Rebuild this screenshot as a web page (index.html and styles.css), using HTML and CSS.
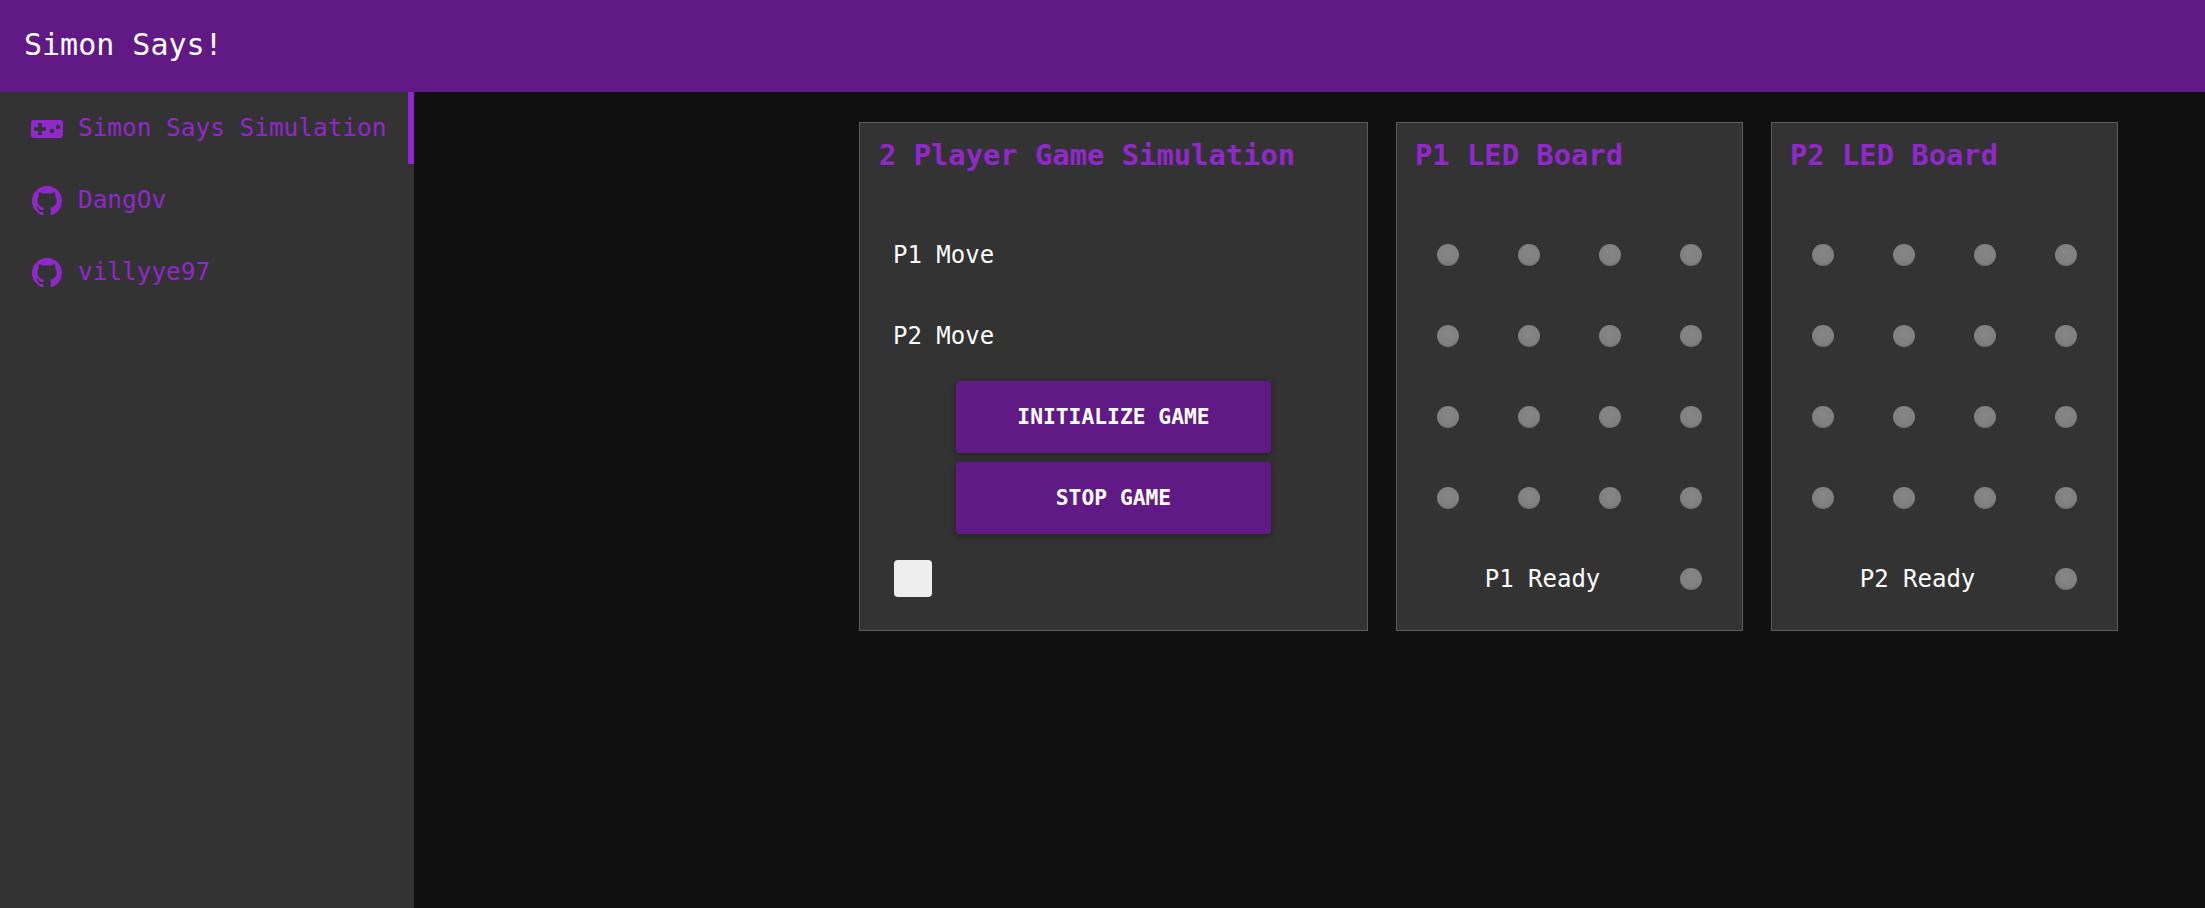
FILE: index.html
```html
<!DOCTYPE html>
<html lang="en">
<head>
<meta charset="utf-8">
<title>Simon Says!</title>
<link rel="stylesheet" href="styles.css">
</head>
<body>
<header class="topbar">Simon Says!</header>
<div class="shell">
  <nav class="sidebar">
    <a class="nav-item active">
      <svg class="nav-icon" viewBox="0 0 32 18"><path fill-rule="evenodd" d="M3 0h26a3 3 0 0 1 3 3v12a3 3 0 0 1-3 3H3a3 3 0 0 1-3-3V3a3 3 0 0 1 3-3zM7.200 3v4.200H3v3.600h4.200V15h3.600v-4.200H15V7.200h-4.200V3zM27 4.700a2.300 2.300 0 1 0 0 4.600a2.300 2.300 0 0 0 0-4.600zM21 8.700a2.300 2.300 0 1 0 0 4.600a2.300 2.300 0 0 0 0-4.600z"/></svg>
      <span class="nav-text">Simon Says Simulation</span>
    </a>
    <a class="nav-item">
      <svg class="nav-icon gh" viewBox="0 0 16 16"><path d="M8 0C3.580 0 0 3.580 0 8c0 3.540 2.290 6.530 5.470 7.590.4.070.55-.17.55-.38 0-.19-.01-.82-.01-1.490-2.010.37-2.530-.49-2.690-.94-.09-.23-.48-.94-.82-1.130-.28-.15-.68-.52-.01-.53.63-.01 1.080.58 1.230.82.72 1.210 1.870.87 2.330.66.07-.52.28-.87.51-1.070-1.780-.2-3.640-.89-3.640-3.950 0-.87.31-1.590.82-2.150-.08-.2-.36-1.020.08-2.120 0 0 .67-.21 2.200.82.64-.18 1.320-.27 2-.27.68 0 1.360.09 2 .27 1.530-1.040 2.200-.82 2.200-.82.44 1.100.16 1.920.08 2.120.51.56.82 1.270.82 2.150 0 3.070-1.870 3.750-3.650 3.950.29.25.54.73.54 1.480 0 1.070-.01 1.930-.01 2.200 0 .21.15.46.55.38A8.013 8.013 0 0 0 16 8c0-4.420-3.580-8-8-8z"/></svg>
      <span class="nav-text">DangOv</span>
    </a>
    <a class="nav-item">
      <svg class="nav-icon gh" viewBox="0 0 16 16"><path d="M8 0C3.580 0 0 3.580 0 8c0 3.540 2.290 6.530 5.470 7.590.4.070.55-.17.55-.38 0-.19-.01-.82-.01-1.490-2.010.37-2.530-.49-2.690-.94-.09-.23-.48-.94-.82-1.130-.28-.15-.68-.52-.01-.53.63-.01 1.080.58 1.230.82.72 1.210 1.870.87 2.330.66.07-.52.28-.87.51-1.070-1.780-.2-3.640-.89-3.640-3.950 0-.87.31-1.590.82-2.150-.08-.2-.36-1.020.08-2.120 0 0 .67-.21 2.200.82.64-.18 1.320-.27 2-.27.68 0 1.360.09 2 .27 1.530-1.040 2.200-.82 2.200-.82.44 1.100.16 1.920.08 2.120.51.56.82 1.270.82 2.150 0 3.070-1.870 3.750-3.650 3.950.29.25.54.73.54 1.480 0 1.070-.01 1.930-.01 2.200 0 .21.15.46.55.38A8.013 8.013 0 0 0 16 8c0-4.420-3.580-8-8-8z"/></svg>
      <span class="nav-text">villyye97</span>
    </a>
  </nav>
  <main class="content">
    <section class="panel game">
      <h2 class="panel-title">2 Player Game Simulation</h2>
      <div class="label move">P1 Move</div>
      <div class="label move">P2 Move</div>
      <button class="btn">INITIALIZE GAME</button>
      <button class="btn">STOP GAME</button>
      <div class="toggle-cell"><span class="toggle"></span></div>
    </section>
    <section class="panel board">
      <h2 class="panel-title">P1 LED Board</h2>
      <i class="led"></i><i class="led"></i><i class="led"></i><i class="led"></i>
      <i class="led"></i><i class="led"></i><i class="led"></i><i class="led"></i>
      <i class="led"></i><i class="led"></i><i class="led"></i><i class="led"></i>
      <i class="led"></i><i class="led"></i><i class="led"></i><i class="led"></i>
      <div class="label ready">P1 Ready</div>
      <i class="led"></i>
    </section>
    <section class="panel board">
      <h2 class="panel-title">P2 LED Board</h2>
      <i class="led"></i><i class="led"></i><i class="led"></i><i class="led"></i>
      <i class="led"></i><i class="led"></i><i class="led"></i><i class="led"></i>
      <i class="led"></i><i class="led"></i><i class="led"></i><i class="led"></i>
      <i class="led"></i><i class="led"></i><i class="led"></i><i class="led"></i>
      <div class="label ready">P2 Ready</div>
      <i class="led"></i>
    </section>
  </main>
</div>
</body>
</html>
```

FILE: styles.css
```css
* { box-sizing: border-box; }
html, body { height: 100%; }
body {
  margin: 0;
  display: flex;
  flex-direction: column;
  background: #111;
  color: #fff;
  font-family: "DejaVu Sans Mono", "Liberation Mono", monospace;
  overflow: hidden;
}
.topbar {
  flex: 0 0 92px;
  display: flex;
  align-items: center;
  padding: 0 0 3px 24px;
  background: #611a85;
  font-size: 30px;
}
.shell { flex: 1; display: flex; min-height: 0; }
.sidebar { flex: 0 0 414px; background: #333; }
.nav-item {
  height: 72px;
  display: flex;
  align-items: center;
  gap: 15px;
  padding-left: 31px;
  color: #9128cb;
  font-size: 24.400px;
}
.nav-item.active { border-right: 6px solid #9128cb; }
.nav-text { margin-bottom: 2px; }
.nav-icon { width: 32px; height: 18px; fill: currentColor; flex: none; margin-top: 2px; }
.nav-icon.gh { height: 30px; }
.content {
  flex: 1;
  display: flex;
  justify-content: flex-end;
  align-items: flex-start;
  gap: 28px;
  padding: 30px 87px 0 0;
}
.panel {
  display: grid;
  grid-auto-rows: 81px;
  padding: 10px 11px 11px 10px;
  background: #333;
  border: 1px solid #5c5c5c;
}
.game { grid-template-columns: repeat(6, 81px); }
.board { grid-template-columns: repeat(4, 81px); }
.panel-title {
  grid-column: 1 / -1;
  margin: 0;
  padding: 5px 0 0 9px;
  color: #9128cb;
  font-size: 28.800px;
  font-weight: 700;
}
.board .panel-title { padding-left: 8px; }
.label { font-size: 24px; align-self: center; white-space: nowrap; }
.move { grid-column: 1 / -1; padding-left: 23px; }
.ready { grid-column: 1 / 4; text-align: center; padding-left: 28px; }
.btn {
  grid-column: 2 / 6;
  margin: 5px 4px 4px 5px;
  padding: 0 0 2px;
  border: 0;
  border-radius: 3px;
  background: #611a85;
  color: #fff;
  font: 700 21.300px "DejaVu Sans Mono", "Liberation Mono", monospace;
  box-shadow: 0 2px 6px rgba(0,0,0,.35);
}
.toggle-cell { grid-column: 1 / 2; display: flex; align-items: center; padding-left: 24px; }
.toggle { width: 38px; height: 37px; flex: none; border-radius: 4px; background: #eee; }
.led {
  justify-self: center;
  align-self: center;
  width: 22px;
  height: 22px;
  margin-top: 1px;
  border-radius: 50%;
  background: radial-gradient(circle at 50% 40%, #868686 0, #808080 60%, #5f5f5f 100%);
}
```
